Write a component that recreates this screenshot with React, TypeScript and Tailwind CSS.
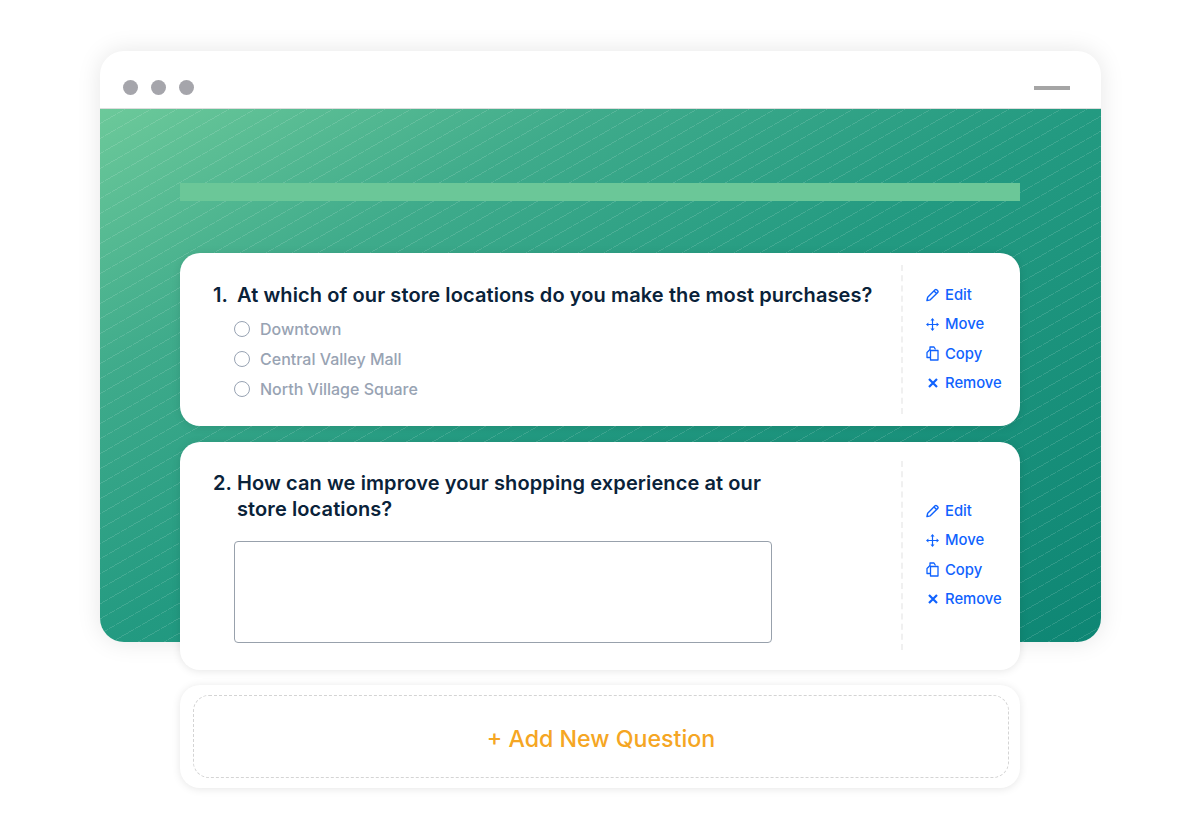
import React from "react";

const font = "font-['Inter','Noto_Sans',sans-serif]";

const PencilIcon = () => (
  <svg width="14" height="14" viewBox="0 0 14 14" fill="none" stroke="currentColor" strokeWidth="1.5" strokeLinejoin="round">
    <path d="M1 13L1.8 9.4L9.8 1.4C10.3 0.9 11 0.9 11.5 1.4L12.6 2.5C13.1 3 13.1 3.7 12.6 4.2L4.6 12.2L1 13Z" />
    <path d="M8.6 2.6L11.4 5.4" />
  </svg>
);

const MoveIcon = () => (
  <svg width="13" height="13" viewBox="0 0 13 13" fill="currentColor">
    <path d="M6.5 1.5V11.5M1.5 6.5H11.5" stroke="currentColor" strokeWidth="1.2" fill="none" />
    <path d="M6.5 0L8.5 2.4H4.5L6.5 0Z" />
    <path d="M6.5 13L8.5 10.6H4.5L6.5 13Z" />
    <path d="M0 6.5L2.4 4.5V8.5L0 6.5Z" />
    <path d="M13 6.5L10.6 4.5V8.5L13 6.5Z" />
  </svg>
);

const CopyIcon = () => (
  <svg width="13" height="15" viewBox="0 0 13 15" fill="none" stroke="currentColor" strokeWidth="1.3" strokeLinejoin="round">
    <path d="M4 4V1H8L9.5 3.5" />
    <path d="M4 3.5L1 6.5V11.5H4.5" />
    <path d="M4.5 4.5H8.5L12 4.5V14H4.5V4.5Z" />
  </svg>
);

const XIcon = () => (
  <svg width="10" height="10" viewBox="0 0 10 10" fill="none" stroke="currentColor" strokeWidth="2.2">
    <path d="M1 1L9 9M9 1L1 9" />
  </svg>
);

const Actions = () => {
  const items = [
    { label: "Edit", icon: <PencilIcon /> },
    { label: "Move", icon: <MoveIcon /> },
    { label: "Copy", icon: <CopyIcon /> },
    { label: "Remove", icon: <XIcon /> },
  ];
  return (
    <div className="flex flex-col gap-[7px]">
      {items.map((item) => (
        <div key={item.label} className="flex h-[22.3px] items-center gap-[6px] text-[14.8px] font-medium text-[#0f62fe]">
          <span className="flex w-[13px] justify-center">{item.icon}</span>
          <span>{item.label}</span>
        </div>
      ))}
    </div>
  );
};

const Question = ({
  children,
  actionsClass,
  className,
}: {
  children: React.ReactNode;
  actionsClass: string;
  className: string;
}) => (
  <div className={`flex rounded-[20px] bg-white shadow-[0_1px_8px_rgba(0,0,0,0.1)] ${className}`}>
    <div className="min-w-0 flex-1">{children}</div>
    <div className={`ml-auto w-[119px] shrink-0 border-l-2 border-dashed border-[#f0f0f0] pl-[23px] ${actionsClass}`}>
      <Actions />
    </div>
  </div>
);

const Radio = ({ label }: { label: string }) => (
  <div className="flex h-[29.8px] items-center gap-[10.5px] text-[16px] font-medium text-[#98a3b3]">
    <span className="h-4 w-4 rounded-full border border-[#98a3b3]" />
    <span>{label}</span>
  </div>
);

export default function App() {
  return (
    <div className={`h-[839px] overflow-hidden bg-white pt-[51px] ${font}`}>
      <div className="ml-[99.5px] w-[1001.5px] rounded-[24px] bg-white shadow-[0_0_24px_rgba(0,0,0,0.1)]">
        <div className="flex h-[58px] items-center justify-between rounded-t-[24px] border-b border-[#ddd] pl-[23px] pr-[31px] pt-[16px]">
          <div className="flex gap-[13px]">
            <span className="h-[15px] w-[15px] rounded-full bg-[#a5a5ab]" />
            <span className="h-[15px] w-[15px] rounded-full bg-[#a5a5ab]" />
            <span className="h-[15px] w-[15px] rounded-full bg-[#a5a5ab]" />
          </div>
          <span className="h-[4px] w-[36px] bg-[#a5a5a5]" />
        </div>
        <div className="h-[533px] rounded-b-[24px] bg-[repeating-linear-gradient(150deg,transparent_0,transparent_12.2px,rgba(255,255,255,0.13)_12.2px,rgba(255,255,255,0.13)_13px),linear-gradient(to_bottom_right,#6cc99a_0%,#3fab8b_25%,#239a81_50%,#0e8674_100%)] pl-[80.5px] pr-[81px] pt-[74px]">
          <div className="h-[18px] bg-[#6bc798]" />
          <Question className="mt-[52px] h-[173px] pt-[12px]" actionsClass="h-[149px] pt-[19px]">
            <div className="pl-[33px] pt-[17px]">
              <div className="flex text-[20px] font-semibold leading-[26px] text-[#0a2239]">
                <span className="w-[24px] shrink-0">1.</span>
                <span className="whitespace-nowrap tracking-[0.1px]">At which of our store locations do you make the most purchases?</span>
              </div>
              <div className="ml-[20.5px] mt-[6.2px]">
                <Radio label="Downtown" />
                <Radio label="Central Valley Mall" />
                <Radio label="North Village Square" />
              </div>
            </div>
          </Question>
          <Question className="mt-[16px] h-[228px] pt-[19px]" actionsClass="h-[189px] pt-[39px]">
            <div className="pl-[33px] pt-[9px]">
              <div className="flex text-[20px] font-semibold leading-[26px] text-[#0a2239]">
                <span className="w-[24px] shrink-0">2.</span>
                <span className="w-[540px] tracking-[0.1px]">How can we improve your shopping experience at our store locations?</span>
              </div>
              <div className="ml-[20.5px] mt-[19px] h-[102px] w-[538.5px] rounded-[4px] border border-[#98a1ac] bg-white" />
            </div>
          </Question>
        </div>
      </div>
      <div className="ml-[180px] mt-[43px] h-[103px] w-[840px] rounded-[20px] bg-white p-[10px_11px_10px_13px] shadow-[0_1px_8px_rgba(0,0,0,0.1)]">
        <div className="flex h-full items-center justify-center rounded-[16px] border border-dashed border-[#d4d4d4] pt-[5px] text-[23.2px] font-medium text-[#f5a623]">
          + Add New Question
        </div>
      </div>
    </div>
  );
}
